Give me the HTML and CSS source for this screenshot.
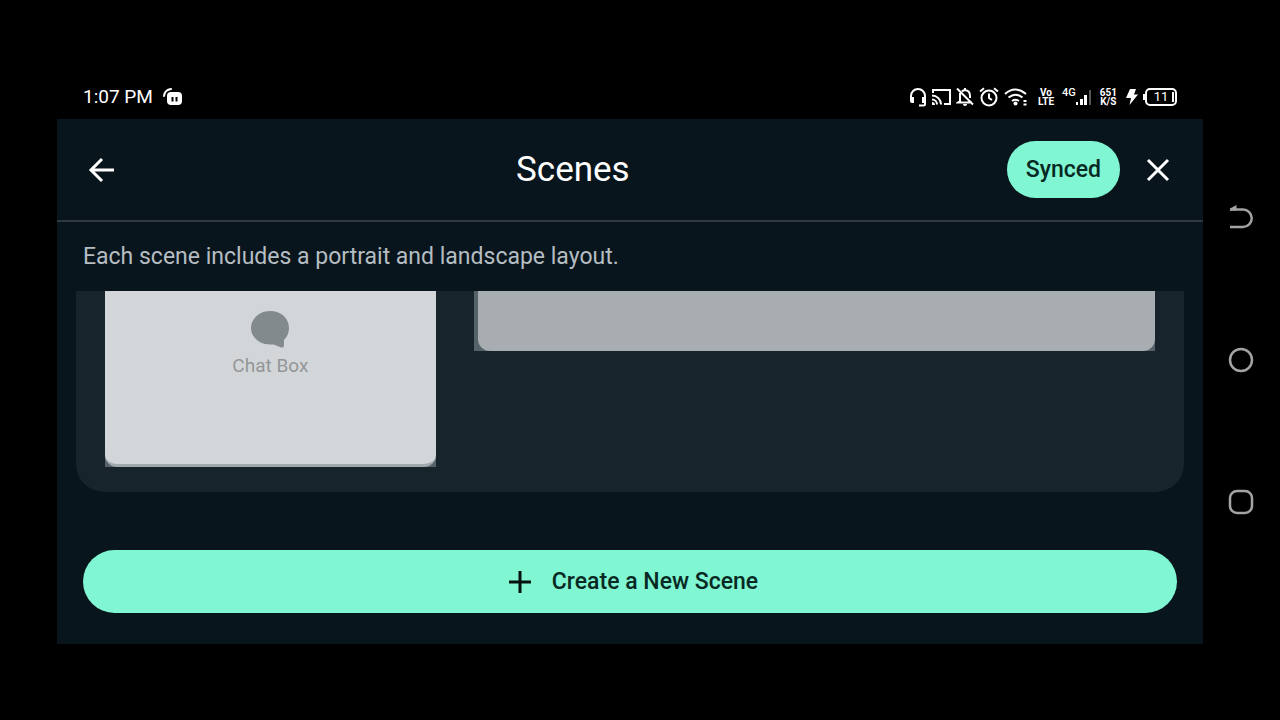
FILE: index.html
```
<!DOCTYPE html>
<html lang="en">

<head>
    <meta charset="UTF-8">
    <meta name="viewport" content="width=device-width, initial-scale=1.0">
    <title>Scenes</title>
    <link rel="stylesheet" href="styles.css">
</head>

<body>
    <div class="screen">
        <div class="status-bar">
            <span class="clock">1:07 PM</span>
            <svg class="app-badge" width="20" height="18" viewBox="0 0 20 18">
                <path d="M1 8C1.500 4 4 1.500 8 1" fill="none" stroke="#fff" stroke-width="2" stroke-linecap="round" />
                <rect x="4" y="4" width="15" height="13" rx="4" fill="#fff" />
                <path d="M9.500 9v4.500M13.500 9v4.500" stroke="#000" stroke-width="2" />
            </svg>
            <div class="status-icons">
                <!-- headset -->
                <svg width="18" height="20" viewBox="0 0 18 20" fill="none" stroke="#fff" stroke-width="2">
                    <path d="M2 12V9a7 7 0 0 1 14 0v8q0 1.500-1.500 1.500H10" />
                    <path d="M1 10h4v6H3q-2 0-2-2zM17 10h-4v6h4z" fill="#fff" stroke="none" />
                </svg>
                <!-- cast -->
                <svg width="19" height="17" viewBox="0 0 19 17" fill="none" stroke="#fff" stroke-width="2">
                    <path d="M1 4V1h17v14h-6M0 6.500a9 9 0 0 1 9 9M0 10.500a5 5 0 0 1 5 5" />
                    <path d="M0 13a3 3 0 0 1 3 3H0z" fill="#fff" stroke="none" />
                </svg>
                <!-- muted bell -->
                <svg width="18" height="20" viewBox="0 0 18 20" fill="none" stroke="#fff" stroke-width="2">
                    <path d="M4 6v8l-2 1.500h14M6 4.500q1.200-1.300 3-1.500 5 .5 5 6v2M9 3V1M1 1.500l16 16" />
                    <path d="M7 17h4a2 2 0 0 1-4 0z" fill="#fff" stroke="none" />
                </svg>
                <!-- alarm -->
                <svg width="20" height="20" viewBox="0 0 20 20" fill="none" stroke="#fff" stroke-width="2">
                    <circle cx="10" cy="11" r="7.500" />
                    <path d="M10 6.500V11l3 2M1 4.500L5 1.200M19 4.500L15 1.200" />
                </svg>
                <!-- wifi -->
                <svg width="24" height="18" viewBox="0 0 24 18" fill="none" stroke="#fff" stroke-width="2">
                    <path d="M1 6Q11-3 22 6M4.500 9.500q7-5.500 14 0M8 13q3.500-2.500 7 0" />
                    <circle cx="11.500" cy="15.500" r="2" fill="#fff" stroke="none" />
                    <path d="M21 12v2M21 15.500v2" stroke-width="3" />
                </svg>
                <span class="stacked volte"><span>Vo</span><span>LTE</span></span>
                <span class="network">4G</span>
                <svg width="17" height="17" viewBox="0 0 17 17">
                    <path d="M1 13h2v3H1zM5 10h3v6H5zM9 6h3v10H9z" fill="#fff" />
                    <path d="M14 1h2v15h-2z" fill="#555" />
                </svg>
                <span class="stacked speed"><span>651</span><span>K/S</span></span>
                <svg width="12" height="16" viewBox="0 0 12 16">
                    <path d="M4 0h6L8 5.500h4L3.500 16 5 9H0z" fill="#fff" />
                </svg>
                <span class="battery">11</span>
            </div>
        </div>

        <main class="app">
            <header class="toolbar">
                <button class="icon-btn" aria-label="Back">
                    <svg width="28" height="28" viewBox="0 0 28 28">
                        <path d="M27 14H4M15 3L4 14l11 11" />
                    </svg>
                </button>
                <h1>Scenes</h1>
                <button class="synced-btn">Synced</button>
                <button class="icon-btn" aria-label="Close">
                    <svg width="28" height="28" viewBox="0 0 28 28">
                        <path d="M4 4l20 20M24 4L4 24" />
                    </svg>
                </button>
            </header>

            <p class="description">Each scene includes a portrait and landscape layout.</p>

            <section class="scene-card">
                <div class="preview">
                    <div class="chat-box">
                        <svg width="40" height="38" viewBox="0 0 40 38">
                            <path d="M20 1C31 1 39 8 39 18c0 5-2 9-5 12v5c0 3-2 3-4 2l-5-2c-2-.8-3-.5-5-.5C9 34.500 1 27 1 18S9 1 20 1z" fill="#838a8e" />
                        </svg>
                        <span>Chat Box</span>
                    </div>
                </div>
                <div class="preview landscape">
                    <div class="landscape-layer"></div>
                </div>
            </section>

            <button class="create-btn">
                <svg width="24" height="24" viewBox="0 0 24 24">
                    <path d="M12 1v22M1 12h22" />
                </svg>
                Create a New Scene
            </button>
        </main>
    </div>

    <nav class="system-nav">
        <button aria-label="Back">
            <svg width="26" height="26" viewBox="0 0 26 26" stroke-width="2.500">
                <path d="M2 5.500h13a8.700 8.700 0 0 1 0 17.500H2" />
                <path d="M2 6.500V4.500L8.500 1v5.500z" fill="#a3a3a3" stroke="none" />
            </svg>
        </button>
        <button aria-label="Home">
            <svg width="26" height="26" viewBox="0 0 26 26" stroke-width="2.500">
                <circle cx="13" cy="13" r="11" />
            </svg>
        </button>
        <button aria-label="Recent apps">
            <svg width="26" height="26" viewBox="0 0 26 26" stroke-width="2.500">
                <rect x="2" y="2" width="22" height="22" rx="7" />
            </svg>
        </button>
    </nav>
</body>

</html>
```
FILE: styles.css
```
* {
    box-sizing: border-box;
}

body {
    display: flex;
    min-height: 100vh;
    margin: 0;
    padding: 75px 0 76px 57px;
    background-color: #000;
    color: #fff;
    font-family: Roboto, sans-serif;
}

button {
    padding: 0;
    border: none;
    background: none;
    color: inherit;
    font-family: inherit;
    cursor: pointer;
}

svg {
    display: block;
    flex-shrink: 0;
}

.screen {
    display: flex;
    flex: 1;
    flex-direction: column;
    min-width: 0;
}

/* status bar */

.status-bar {
    display: flex;
    align-items: center;
    height: 44px;
    padding: 0 26px;
}

.clock {
    font-size: 19px;
    line-height: 24px;
}

.app-badge {
    margin-left: 10px;
}

.status-icons {
    display: flex;
    align-items: center;
    gap: 5px;
    margin-left: auto;
}

.stacked {
    display: flex;
    flex-direction: column;
    align-items: center;
    font-size: 10px;
    font-weight: 700;
    line-height: 9px;
}

.volte {
    margin-left: 5px;
}

.network {
    align-self: flex-start;
    margin: 0 -6px 0 3px;
    font-size: 11px;
    font-weight: 500;
    line-height: 12px;
}

.speed {
    margin: 0 4px 0 3px;
}

.battery {
    position: relative;
    width: 32px;
    height: 18px;
    margin-left: 2px;
    border: 2px solid #fff;
    border-radius: 5px;
    font-size: 13px;
    line-height: 14px;
    text-align: center;
}

.battery::before,
.battery::after {
    content: "";
    position: absolute;
    background-color: #fff;
}

.battery::before {
    top: 4px;
    left: -4px;
    width: 2px;
    height: 6px;
}

.battery::after {
    top: 2px;
    right: 1px;
    width: 2px;
    height: 10px;
}

/* app */

.app {
    display: flex;
    flex: 1;
    flex-direction: column;
    background-color: #08151c;
}

.toolbar {
    display: flex;
    align-items: center;
    gap: 24px;
    height: 103px;
    padding: 0 31px 0 30px;
    border-bottom: 2px solid #2f3a40;
}

.toolbar h1 {
    flex: 1;
    margin: 0;
    padding-left: 24px;
    font-size: 35px;
    font-weight: 400;
    text-align: center;
}

.icon-btn svg {
    fill: none;
    stroke: #fff;
    stroke-width: 3;
}

.synced-btn {
    height: 57px;
    padding: 0 19px;
    border-radius: 29px;
    background-color: #80f6d2;
    color: #082923;
    font-size: 23px;
    font-weight: 500;
}

.description {
    margin: 0;
    padding: 20px 26px 19px;
    color: #b5bdc2;
    font-size: 23px;
    line-height: 30px;
}

.scene-card {
    display: grid;
    grid-template-columns: 33fr 68fr;
    align-items: start;
    gap: 38px;
    height: 201px;
    margin: 0 19px 58px;
    padding: 0 29px;
    border-radius: 0 0 28px 28px;
    background-color: #18242c;
}

.preview {
    background-color: #56626a;
}

.landscape {
    padding-left: 4px;
}

.chat-box {
    display: flex;
    flex-direction: column;
    align-items: center;
    gap: 5px;
    height: 176px;
    padding-top: 19px;
    border-bottom: 3px solid #a0a9ae;
    border-radius: 0 0 12px 12px;
    background-color: #d3d6d8;
    color: #939699;
    font-size: 19px;
    line-height: 26px;
}

.landscape-layer {
    height: 60px;
    border-radius: 0 0 12px 12px;
    background-color: #a7adb0;
}

.create-btn {
    display: flex;
    align-items: center;
    justify-content: center;
    gap: 20px;
    height: 63px;
    margin: 0 26px 31px;
    padding-left: 6px;
    border-radius: 32px;
    background-color: #80f6d2;
    color: #082923;
    font-size: 23px;
    font-weight: 500;
}

.create-btn svg {
    stroke: #06120f;
    stroke-width: 3;
}

/* system navigation */

.system-nav {
    display: flex;
    flex-direction: column;
    align-items: center;
    justify-content: space-between;
    width: 77px;
    padding: 129px 2px 129px 0;
}

.system-nav svg {
    fill: none;
    stroke: #a3a3a3;
}
```
